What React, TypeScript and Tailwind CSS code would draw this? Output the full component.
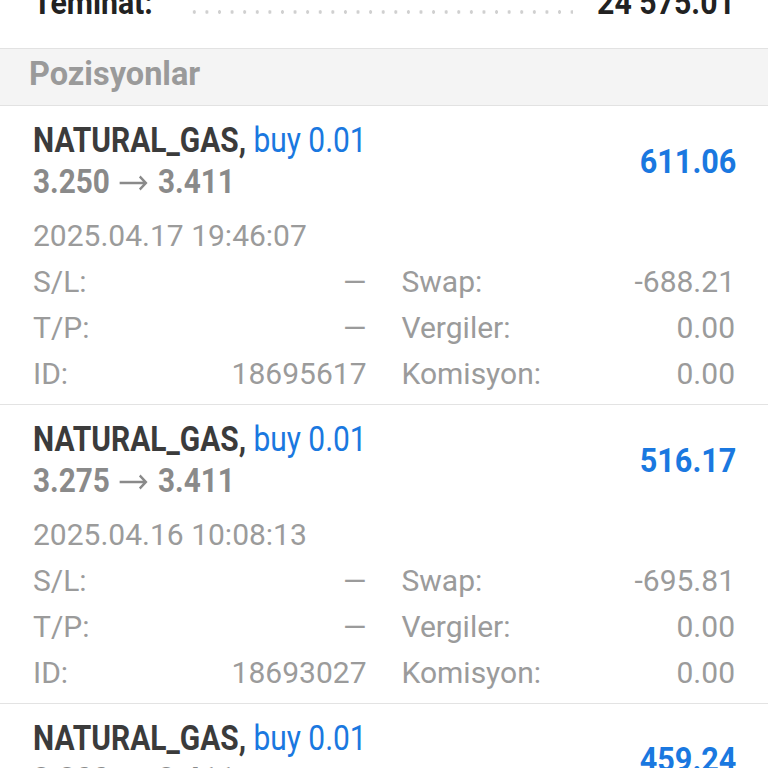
type Position = {
  open: string;
  close: string;
  profit: string;
  time: string;
  swap: string;
  id: string;
};

const positions: Position[] = [
  { open: '3.250', close: '3.411', profit: '611.06', time: '2025.04.17 19:46:07', swap: '-688.21', id: '18695617' },
  { open: '3.275', close: '3.411', profit: '516.17', time: '2025.04.16 10:08:13', swap: '-695.81', id: '18693027' },
  { open: '3.300', close: '3.411', profit: '459.24', time: '2025.04.16 09:12:40', swap: '-701.12', id: '18692811' },
];

function Arrow() {
  return (
    <svg viewBox="0 0 34 16" className="mx-[2px] inline-block h-[16px] w-[34px] align-[2px]" fill="none" stroke="currentColor" strokeWidth="2.6">
      <path d="M1 8h30M24 1.5l7 6.5-7 6.5" />
    </svg>
  );
}

function Field({ label, value }: { label: string; value: string }) {
  return (
    <div className="flex h-[46px] items-center justify-between">
      <span>{label}</span>
      <span>{value}</span>
    </div>
  );
}

function PositionRow({ p }: { p: Position }) {
  return (
    <div className="border-b border-[#e3e3e3] pt-[16px] pb-[8px]">
      <div className="flex items-center pr-[32px] pl-[33px]">
        <div className="flex-1">
          <div className="h-[40px] text-[35px] leading-[38px] whitespace-nowrap">
            <span className="inline-block origin-left scale-x-[0.855]">
              <span className="font-bold text-[#3b3b3b]">NATURAL_GAS,</span>{' '}
              <span className="text-[#1a78e0]">buy 0.01</span>
            </span>
          </div>
          <div className="h-[38px] text-[34px] leading-[38px] font-bold whitespace-nowrap text-[#8a8a8a]">
            <span className="inline-block origin-left scale-x-[0.875]">
              {p.open} <Arrow /> {p.close}
            </span>
          </div>
        </div>
        <span className="inline-block origin-right scale-x-[0.9] text-[34px] leading-[38px] font-bold text-[#1a78e0]">
          {p.profit}
        </span>
      </div>
      <div className="mt-[12px] px-[33px] text-[30px] text-[#9b9b9b]">
        <div className="flex h-[46px] items-center">{p.time}</div>
        <div className="grid grid-cols-2 gap-x-[35px]">
          <div>
            <Field label="S/L:" value="—" />
            <Field label="T/P:" value="—" />
            <Field label="ID:" value={p.id} />
          </div>
          <div>
            <Field label="Swap:" value={p.swap} />
            <Field label="Vergiler:" value="0.00" />
            <Field label="Komisyon:" value="0.00" />
          </div>
        </div>
      </div>
    </div>
  );
}

export default function App() {
  return (
    <div className="h-[768px] w-[768px] overflow-hidden bg-white font-['Roboto',sans-serif]">
      <div className="h-[49px] overflow-hidden border-b border-[#e2e2e2]">
        <div className="-mt-[15px] flex h-[34px] items-baseline px-[33px] text-[34px] leading-[34px] font-bold text-[#222]">
          <span className="inline-block origin-left scale-x-[0.89]">Teminat:</span>
          <div className="ml-[20px] h-[4px] w-[385px] bg-[radial-gradient(circle,#d0d0d0_1.5px,transparent_2px)] bg-[length:12.6px_4px]" />
          <span className="ml-auto inline-block origin-right scale-x-[0.89]">24 575.01</span>
        </div>
      </div>
      <div className="flex h-[57px] items-center border-b border-[#e2e2e2] bg-[#f4f4f4] px-[29px] pb-[6px] text-[32.5px] font-bold text-[#9a9a9a]">
        Pozisyonlar
      </div>
      {positions.map((p) => (
        <PositionRow key={p.id} p={p} />
      ))}
    </div>
  );
}
